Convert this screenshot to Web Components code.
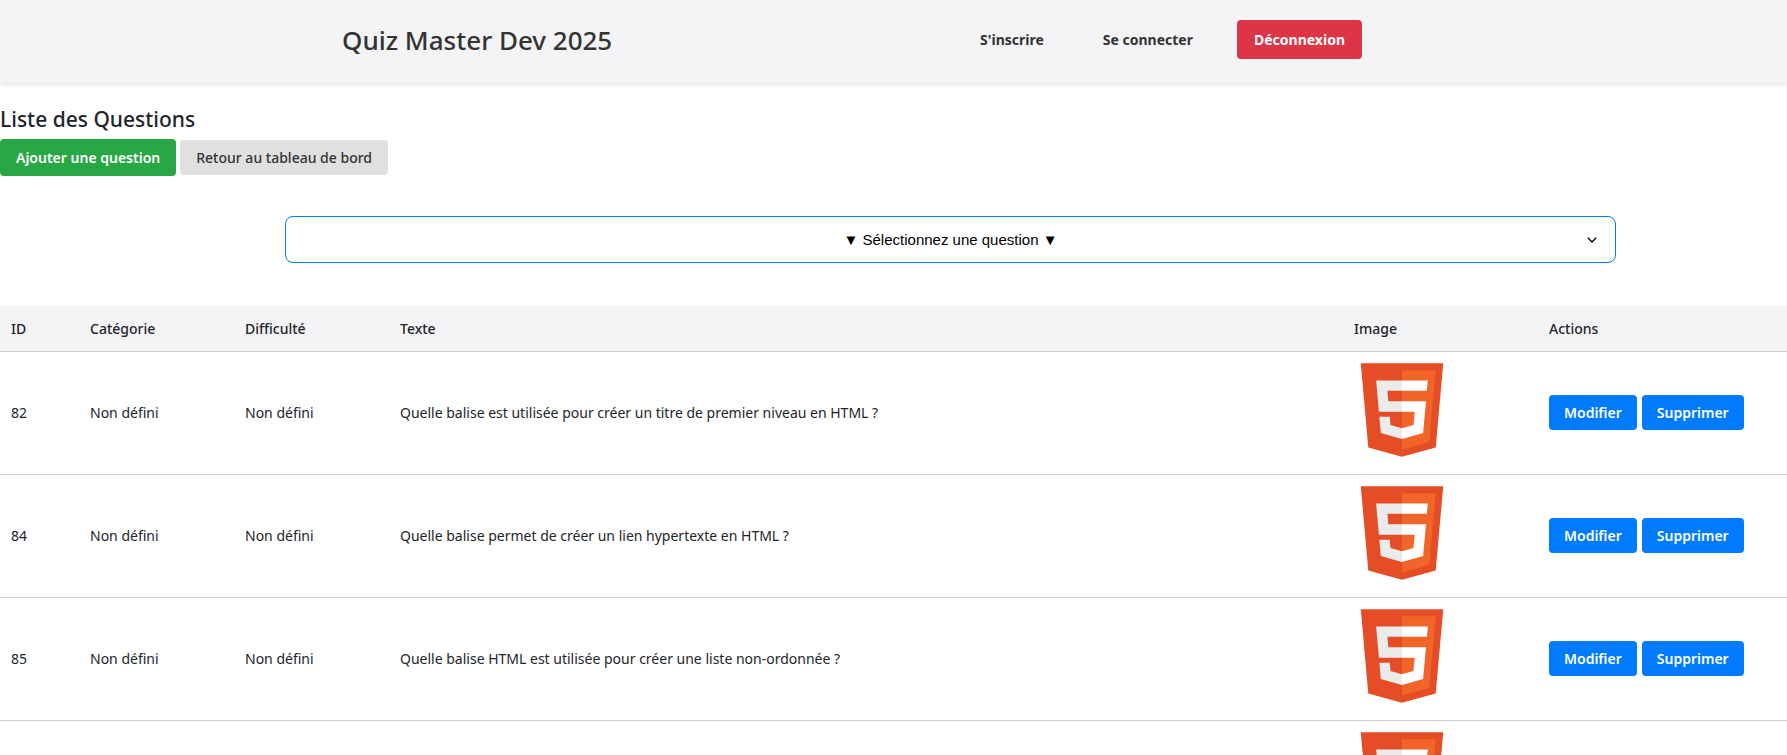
<!DOCTYPE html>
<html lang="fr">
<head>
<meta charset="utf-8">
<title>Quiz Master Dev 2025</title>
<style>
  body {
    margin: 0;
    background: #fff;
    color: #212529;
    font: 14px/24px "Noto Sans", "Open Sans", sans-serif;
  }
  h1 { margin: 0; font-size: 26px; line-height: 32px; font-weight: 500; color: #333; }
  h2 { margin: 0; font-size: 21px; line-height: 24px; font-weight: 500; }
  main { display: block; padding-top: 24px; }
  .toolbar { display: flex; align-items: center; gap: 4px; padding-top: 8px; }
  question-picker { margin: 40px 171px 43px 285px; }
</style>
</head>
<body>
<site-header>
  <h1 slot="title">Quiz Master Dev 2025</h1>
  <nav-link href="#inscription">S'inscrire</nav-link>
  <nav-link href="#connexion">Se connecter</nav-link>
  <action-button variant="danger">Déconnexion</action-button>
</site-header>
<main>
  <h2>Liste des Questions</h2>
  <div class="toolbar">
    <action-button variant="success" href="#ajouter">Ajouter une question</action-button>
    <action-button variant="muted" href="#tableau-de-bord">Retour au tableau de bord</action-button>
  </div>
  <question-picker></question-picker>
  <question-table></question-table>
</main>

<script>
const attach = (host, html) => {
  host.attachShadow({ mode: 'open' }).innerHTML = html;
};

customElements.define('site-header', class extends HTMLElement {
  constructor() {
    super();
    attach(this, `
      <style>
        :host { display: block; background: #f4f4f7; box-shadow: 0 2px 4px rgba(0, 0, 0, .1); }
        header {
          display: flex; align-items: flex-start; justify-content: space-between;
          padding: 20px 425px 24px 342px;
        }
        ::slotted(h1) { padding: 4px 0 3px; }
        nav { display: flex; align-items: center; gap: 29px; }
      </style>
      <header><slot name="title"></slot><nav aria-label="Compte"><slot></slot></nav></header>`);
  }
});

customElements.define('nav-link', class extends HTMLElement {
  connectedCallback() {
    if (this.shadowRoot) return;
    attach(this, `
      <style>
        :host { display: block; }
        a { display: block; padding: 0 15px; color: #333; font-weight: 700; text-decoration: none; }
      </style>
      <a href="${this.getAttribute('href')}"><slot></slot></a>`);
  }
});

customElements.define('action-button', class extends HTMLElement {
  connectedCallback() {
    if (this.shadowRoot) return;
    const href = this.getAttribute('href');
    const open = href ? `<a class="b" href="${href}">` : '<button class="b" type="button">';
    const close = href ? '</a>' : '</button>';
    attach(this, `
      <style>
        :host { display: block; }
        .b {
          display: block; box-sizing: border-box; margin: 0; border: 0; border-radius: 4px;
          padding: 6px 15px 5px; background: #007bff; color: #fff; cursor: pointer;
          font: 600 14px/24px "Noto Sans", "Open Sans", sans-serif;
          text-decoration: none; white-space: nowrap;
        }
        :host([variant="danger"]) .b { padding: 8px 17px 7px; background: #dc3545; font-weight: 700; }
        :host([variant="success"]) .b { padding: 7px 16px 6px; background: #28a745; }
        :host([variant="muted"]) .b { padding: 6px 16px 5px; background: #e0e0e0; color: #333; font-weight: 500; }
      </style>
      ${open}<slot></slot>${close}`);
  }
});

customElements.define('question-picker', class extends HTMLElement {
  constructor() {
    super();
    attach(this, `
      <style>
        :host { display: grid; align-items: center; }
        select, svg { grid-area: 1 / 1; }
        select {
          appearance: none; width: 100%; height: 47px; margin: 0; padding: 0 12px;
          border: 1px solid #007bff; border-radius: 8px; background: #fff; color: #000;
          font: 15px/24px "Liberation Sans", Arial, sans-serif;
          text-align: center; text-align-last: center;
        }
        svg { justify-self: end; margin-right: 19px; pointer-events: none; }
      </style>
      <select aria-label="Question">
        <option>▼ Sélectionnez une question ▼</option>
      </select>
      <svg width="10" height="6" viewBox="0 0 10 6" fill="none" stroke="#000" stroke-width="1.4"><path d="M.8.8 5 5 9.2.8"/></svg>`);
  }
});

customElements.define('html-logo', class extends HTMLElement {
  constructor() {
    super();
    attach(this, `
      <style>
        :host { display: block; width: 96px; height: 96px; }
        svg { display: block; width: 100%; height: 100%; }
      </style>
      <svg viewBox="0 0 128 128" role="img" aria-label="HTML5">
        <path fill="#E44D26" d="M19.037 113.876L9.032 1.661h109.936l-10.016 112.198-45.019 12.48z"/>
        <path fill="#F16529" d="M64 116.8l36.378-10.086 8.559-95.878H64z"/>
        <path fill="#EBEBEB" d="M64 52.455H45.788L44.53 38.361H64V24.599H29.489l.33 3.692 3.382 37.927H64zm0 35.743l-.061.017-15.327-4.14-.979-10.975H33.816l1.928 21.609 28.193 7.826.063-.017z"/>
        <path fill="#fff" d="M63.952 52.455v13.763h16.947l-1.597 17.849-15.35 4.143v14.319l28.215-7.82.207-2.325 3.234-36.233.335-3.696h-3.708zm0-27.856v13.762h33.244l.276-3.092.628-6.978.329-3.692z"/>
      </svg>`);
  }
});

customElements.define('question-table', class extends HTMLElement {
  constructor() {
    super();
    const questions = [
      { id: 82, category: 'Non défini', level: 'Non défini', text: 'Quelle balise est utilisée pour créer un titre de premier niveau en HTML ?' },
      { id: 84, category: 'Non défini', level: 'Non défini', text: 'Quelle balise permet de créer un lien hypertexte en HTML ?' },
      { id: 85, category: 'Non défini', level: 'Non défini', text: 'Quelle balise HTML est utilisée pour créer une liste non-ordonnée ?' },
      { id: '', category: '', level: '', text: '' },
    ];
    const rows = questions.map(({ id, category, level, text }) => `
      <tr>
        <td>${id}</td><td>${category}</td><td>${level}</td><td>${text}</td>
        <td class="image"><html-logo></html-logo></td>
        <td>${id ? `<div class="actions">
          <action-button href="#modifier-${id}">Modifier</action-button>
          <action-button>Supprimer</action-button>
        </div>` : ''}</td>
      </tr>`).join('');
    attach(this, `
      <style>
        :host { display: block; }
        table { width: 100%; table-layout: fixed; border-collapse: separate; border-spacing: 0; }
        th, td { padding: 10px 11px; border-bottom: 1px solid #ccc; text-align: left; vertical-align: middle; }
        th { padding: 11px 11px 10px; background: #f4f4f7; font-weight: 500; }
        td:last-child { padding-bottom: 12px; }
        td.image { padding: 10px 0 16px 11px; }
        .id { width: 57px; } .cat { width: 133px; } .img { width: 173px; } .act { width: 227px; }
        .actions { display: flex; gap: 5px; }
      </style>
      <table>
        <thead><tr>
          <th class="id">ID</th><th class="cat">Catégorie</th><th class="cat">Difficulté</th>
          <th>Texte</th><th class="img">Image</th><th class="act">Actions</th>
        </tr></thead>
        <tbody>${rows}</tbody>
      </table>`);
  }
});
</script>
</body>
</html>
